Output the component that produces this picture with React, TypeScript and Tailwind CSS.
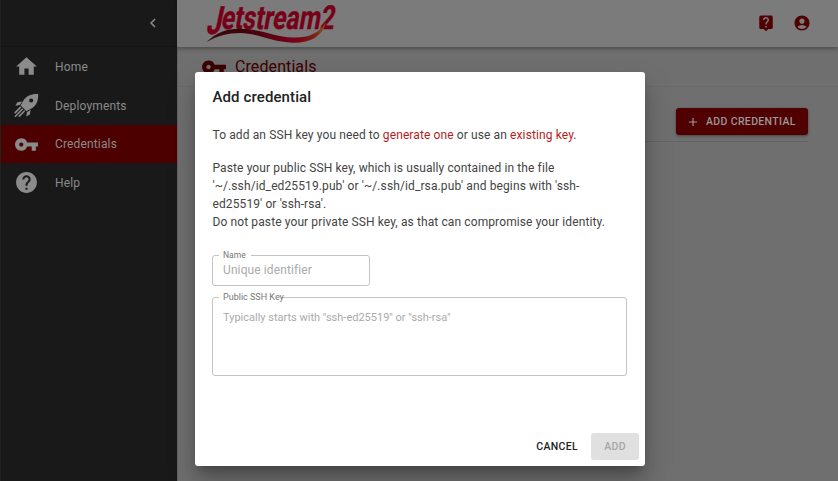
import { MdHome, MdVpnKey, MdHelp, MdLiveHelp, MdAccountCircle, MdChevronLeft, MdAdd } from "react-icons/md";

function Logo() {
  return (
    <svg className="ml-7 h-[46px] w-[140px] overflow-visible" viewBox="0 0 140 46">
      <defs>
        <linearGradient id="swoosh" x1="0" x2="1">
          <stop offset="0" stopColor="#3d080d" />
          <stop offset="0.3" stopColor="#3b0408" />
          <stop offset="0.75" stopColor="#790018" />
          <stop offset="0.9" stopColor="#7a2015" />
          <stop offset="1" stopColor="#8b5a1a" />
        </linearGradient>
      </defs>
      <g fontFamily="Roboto, sans-serif" fontWeight="700" fill="#760018" stroke="#760018" strokeWidth="0.4">
        <text transform="translate(0.5 32.5) skewX(-12)" fontSize="39" textLength="15" lengthAdjust="spacingAndGlyphs">J</text>
        <text transform="translate(15.5 28) skewX(-10)" fontSize="33" textLength="113" lengthAdjust="spacingAndGlyphs">etstream2</text>
      </g>
      <path d="M1.5 41C12 31 22 27.6 35 27.7C57 28 68 36 88 36.5C103 37 113 33 121 21.5C117 36 105 42 88 41.7C66 41 52 32 35 32C23 32 12 35 1.5 41Z" fill="url(#swoosh)" />
    </svg>
  );
}

function Rocket({ size }: { size: number }) {
  return (
    <svg width={size} height={size} viewBox="0 0 25 25" fill="currentColor">
      <path fillRule="evenodd" d="M24.2.9C18 .7 13.4 2.2 10 6.6L6.6 12.4L12.4 18.3L18.3 14.9C23 11.4 24.4 7 24.2.9ZM17.2 5.4A2.1 2.1 0 1 1 17.2 9.6A2.1 2.1 0 1 1 17.2 5.4Z" />
      <path d="M8.3 8.4L3.3 9.2L1.4 12.7L5.8 12.1ZM16.6 16.7L15.9 21.6L12.3 23.6L12.9 19.2Z" />
      <path d="M6.4 14.4L1.2 19.6M8.3 16.3L1.4 23.2M10.2 18.2L5.3 23.1" fill="none" stroke="currentColor" strokeWidth="1.6" strokeLinecap="round" />
    </svg>
  );
}

export default function App() {
  const items = [
    { label: "Home", Icon: MdHome, top: "h-[39px]", active: false },
    { label: "Deployments", Icon: Rocket, top: "h-[39px]", active: false },
    { label: "Credentials", Icon: MdVpnKey, top: "h-[38px]", active: true },
    { label: "Help", Icon: MdHelp, top: "h-[39px]", active: false },
  ];
  return (
    <div className="relative flex h-[481px] w-[838px] overflow-hidden bg-[#6f6f6f] font-['Roboto',sans-serif]">
      <nav className="flex w-[177px] shrink-0 flex-col border-l border-[#222] bg-[#191919] text-[#8b8b8b]">
        <div className="flex h-[47px] items-center justify-end border-b border-[#151515] pr-[15px]">
          <MdChevronLeft size={18} />
        </div>
        {items.map(({ label, Icon, top, active }) => (
          <div key={label} className={`flex items-center pl-[13px] text-[12px] tracking-[0.15px] ${top} ${active ? "bg-[#4d0000]" : ""}`}>
            <Icon size={25} />
            <span className="ml-4">{label}</span>
          </div>
        ))}
      </nav>
      <main className="flex flex-1 flex-col border-l border-[#626262]">
        <header className="z-0 -ml-px flex h-[47px] shrink-0 items-center bg-[#7b7b7b] shadow-[0_2px_4px_rgba(0,0,0,0.3)]">
          <Logo />
          <div className="ml-auto flex items-center gap-[18px] pr-[27px] pb-px text-[#500000]">
            <MdLiveHelp size={18} />
            <MdAccountCircle size={18} />
          </div>
        </header>
        <div className="flex h-10 items-center border-b border-[#696969] pl-[23px] text-[#3c0000]">
          <MdVpnKey size={26} />
          <span className="ml-2 text-[16px] tracking-[0.09px]">Credentials</span>
        </div>
        <div className="mr-[30px] ml-6 flex h-[55px] items-start justify-end border-b border-[#636363] pt-[21px]">
          <button className="flex h-[27px] w-[132px] items-center rounded-[3px] bg-[#500000] pl-[10px] text-[10.5px] font-medium tracking-[0.35px] text-[#999] shadow-[0_1px_3px_rgba(0,0,0,0.4)]">
            <MdAdd size={14} />
            <span className="ml-[6px] whitespace-nowrap">ADD CREDENTIAL</span>
          </button>
        </div>
      </main>

      <div role="dialog" className="absolute top-[72px] left-[195px] flex h-[394px] w-[450px] flex-col rounded-[3px] bg-white text-[#444] shadow-[0_8px_12px_-4px_rgba(0,0,0,0.3),0_16px_28px_2px_rgba(0,0,0,0.2)]">
        <h2 className="px-[17.5px] pt-[13px] text-[15px] leading-6 font-medium tracking-[0.11px] text-[#222]">Add credential</h2>
        <div className="px-[17.5px] text-[12px] leading-[18px] tracking-[0.11px]">
          <p className="mt-[17px]">
            To add an SSH key you need to <a className="text-[#b71c1c]">generate one</a> or use an <a className="text-[#b71c1c]">existing key</a>.
          </p>
          <p className="mt-[15px] whitespace-nowrap">
            Paste your public SSH key, which is usually contained in the file<br />
            '~/.ssh/id_ed25519.pub' or '~/.ssh/id_rsa.pub' and begins with 'ssh-<br />
            ed25519' or 'ssh-rsa'.<br />
            Do not paste your private SSH key, as that can compromise your identity.
          </p>
        </div>
        <div className="flex flex-col pt-[19px] pr-[18px] pl-[17px]">
          <fieldset className="h-[36px] w-[158px] rounded-[3px] border border-[#c4c4c4] pl-[6px]">
            <legend className="h-[11px] w-[32px] pl-1 text-[8.5px] leading-[11px] whitespace-nowrap text-[#777]">Name</legend>
            <div className="pl-1 text-[12px] leading-[18px] tracking-[0.1px] text-[#aaa]">Unique identifier</div>
          </fieldset>
          <fieldset className="mt-[6px] h-[84px] rounded-[3px] border border-[#c4c4c4] pl-[6px]">
            <legend className="h-[11px] w-[62px] pl-1 text-[9px] leading-[11px] whitespace-nowrap text-[#777]">Public SSH Key</legend>
            <div className="pt-[6px] pl-1 text-[11px] leading-[18px] text-[#aaa]">Typically starts with "ssh-ed25519" or "ssh-rsa"</div>
          </fieldset>
        </div>
        <div className="mt-auto flex items-center justify-end pr-[6px] pb-[6px] text-[10.5px] font-medium tracking-[0.33px]">
          <button className="mr-[13px] text-[#222]">CANCEL</button>
          <button className="h-[27px] w-12 rounded-[3px] bg-[#e0e0e0] text-[#a6a6a6]">ADD</button>
        </div>
      </div>
    </div>
  );
}
